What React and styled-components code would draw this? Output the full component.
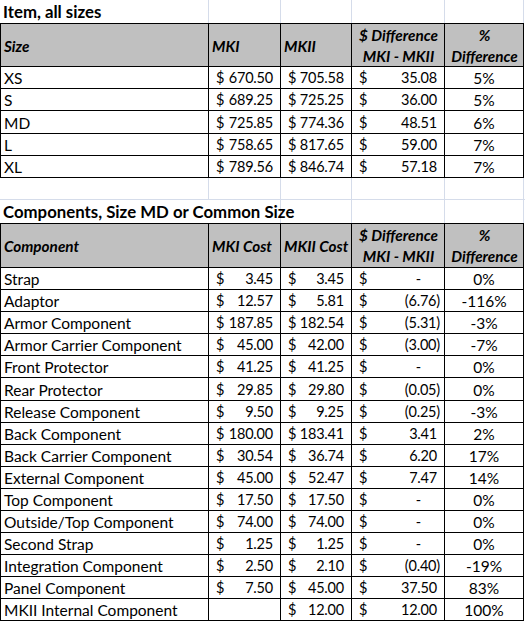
import styled, { createGlobalStyle } from 'styled-components'

const GlobalStyle = createGlobalStyle`
  html, body {
    margin: 0;
    padding: 0;
    background: #fff;
  }
  body {
    font-family: Lato, "Open Sans", "Liberation Sans", sans-serif;
    color: #000;
    overflow: hidden;
  }
`

const GRID_COLS = '208px 72px 71px 93px 79px'
const SHEET_COLS = '209px 72px 71px 93px 79px'
const GRID_LINE = '#d5dcea'

const Sheet = styled.div`
  width: 525px;
  height: 622px;
  overflow: hidden;
`

const SheetRow = styled.div`
  display: grid;
  grid-template-columns: ${SHEET_COLS};
  height: ${(p) => p.h || 22}px;
  box-sizing: border-box;
  border-bottom: ${(p) => (p.lined ? `1px solid ${GRID_LINE}` : 'none')};
`

const SheetCell = styled.div`
  border-right: 1px solid ${GRID_LINE};
  grid-column: span ${(p) => p.span || 1};
  box-sizing: border-box;
`

const Title = styled.div`
  font-weight: 700;
  font-size: 16.8px;
  line-height: 20px;
  white-space: nowrap;
  padding: 2px 0 0 3px;
`

const Table = styled.div`
  border-top: 1px solid #000;
  border-left: 1px solid #000;
  width: 524px;
  box-sizing: border-box;
`

const Row = styled.div`
  display: grid;
  grid-template-columns: ${GRID_COLS};
  height: ${(p) => p.h}px;
`

const HeadCell = styled.div`
  background: #c0c0c0;
  border-right: 1px solid #000;
  border-bottom: 1px solid #000;
  display: flex;
  flex-direction: column;
  justify-content: center;
  align-items: ${(p) => (p.center ? 'center' : 'flex-start')};
  text-align: ${(p) => (p.center ? 'center' : 'left')};
  font-weight: 700;
  font-style: italic;
  font-size: 15.3px;
  line-height: 21px;
  padding: 2px 2px 0 3px;
  white-space: nowrap;
  overflow: hidden;
`

const Cell = styled.div`
  border-right: 1px solid #000;
  border-bottom: 1px solid #000;
  display: flex;
  align-items: flex-end;
  justify-content: ${(p) => (p.center ? 'center' : 'space-between')};
  font-size: 15.5px;
  line-height: 18px;
  padding: 0 3px 1px 3px;
  white-space: nowrap;
  overflow: hidden;
`

const MoneyCell = styled(Cell)`
  font-size: 14.5px;
  padding: 0 2px 1px 2px;
`

const Dollar = styled.span`
  margin-left: 5px;
  margin-right: 3px;
`

const Amount = styled.span`
  letter-spacing: -0.2px;
  margin-right: ${(p) => (p.neg ? 2 : p.dash ? 21 : 5)}px;
`

const size = [
  ['XS', '670.50', '705.58', '35.08', '5%'],
  ['S', '689.25', '725.25', '36.00', '5%'],
  ['MD', '725.85', '774.36', '48.51', '6%'],
  ['L', '758.65', '817.65', '59.00', '7%'],
  ['XL', '789.56', '846.74', '57.18', '7%'],
]

const parts = [
  ['Strap', '3.45', '3.45', '-', '0%'],
  ['Adaptor', '12.57', '5.81', '(6.76)', '-116%'],
  ['Armor Component', '187.85', '182.54', '(5.31)', '-3%'],
  ['Armor Carrier Component', '45.00', '42.00', '(3.00)', '-7%'],
  ['Front Protector', '41.25', '41.25', '-', '0%'],
  ['Rear Protector', '29.85', '29.80', '(0.05)', '0%'],
  ['Release Component', '9.50', '9.25', '(0.25)', '-3%'],
  ['Back Component', '180.00', '183.41', '3.41', '2%'],
  ['Back Carrier Component', '30.54', '36.74', '6.20', '17%'],
  ['External Component', '45.00', '52.47', '7.47', '14%'],
  ['Top Component', '17.50', '17.50', '-', '0%'],
  ['Outside/Top Component', '74.00', '74.00', '-', '0%'],
  ['Second Strap', '1.25', '1.25', '-', '0%'],
  ['Integration Component', '2.50', '2.10', '(0.40)', '-19%'],
  ['Panel Component', '7.50', '45.00', '37.50', '83%'],
  ['MKII Internal Component', null, '12.00', '12.00', '100%'],
]

const Money = ({ value }) => {
  if (value == null) return <MoneyCell />
  return (
    <MoneyCell>
      <Dollar>$</Dollar>
      <Amount neg={value.startsWith('(')} dash={value === '-'}>
        {value}
      </Amount>
    </MoneyCell>
  )
}

const GridRow = ({ h, lined, children }) => (
  <SheetRow h={h} lined={lined}>
    {children || (
      <>
        <SheetCell />
        <SheetCell />
        <SheetCell />
        <SheetCell />
        <SheetCell />
      </>
    )}
  </SheetRow>
)

const DataTable = ({ heads, rows, headH, rowH }) => (
  <Table>
    <Row h={headH}>
      <HeadCell>{heads[0]}</HeadCell>
      <HeadCell>{heads[1]}</HeadCell>
      <HeadCell>{heads[2]}</HeadCell>
      <HeadCell center>
        <span>$ Difference</span>
        <span>MKI - MKII</span>
      </HeadCell>
      <HeadCell center>
        <span>%</span>
        <span>Difference</span>
      </HeadCell>
    </Row>
    {rows.map((r) => (
      <Row h={rowH} key={r[0]}>
        <Cell>{r[0]}</Cell>
        <Money value={r[1]} />
        <Money value={r[2]} />
        <Money value={r[3]} />
        <Cell center>{r[4]}</Cell>
      </Row>
    ))}
  </Table>
)

export default function App() {
  return (
    <Sheet>
      <GlobalStyle />
      <GridRow h={23}>
        <SheetCell>
          <Title>Item, all sizes</Title>
        </SheetCell>
        <SheetCell />
        <SheetCell />
        <SheetCell />
        <SheetCell />
      </GridRow>
      <DataTable heads={['Size', 'MKI', 'MKII']} rows={size} headH={43} rowH={22.2} />
      <GridRow h={22} lined />
      <GridRow h={23}>
        <SheetCell span={2}>
          <Title>Components, Size MD or Common Size</Title>
        </SheetCell>
        <SheetCell />
        <SheetCell />
        <SheetCell />
      </GridRow>
      <DataTable
        heads={['Component', 'MKI Cost', 'MKII Cost']}
        rows={parts}
        headH={44}
        rowH={22.1}
      />
    </Sheet>
  )
}
